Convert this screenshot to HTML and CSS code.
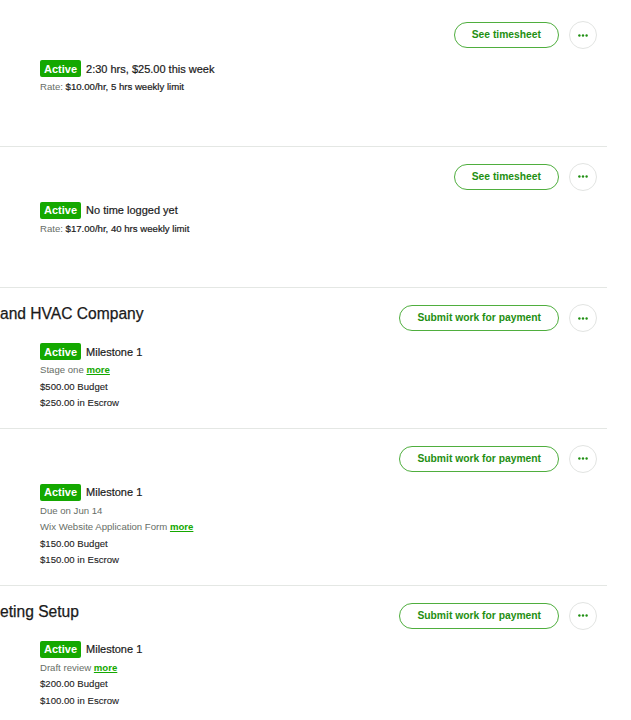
FILE: index.html
```html
<!DOCTYPE html>
<html lang="en">
<head>
<meta charset="utf-8">
<title>Contracts</title>
<link rel="stylesheet" href="styles.css">
</head>
<body>
<div class="contracts">
  <section class="contract contract--hourly">
    <div class="contract-head">
      <h3 class="contract-title"></h3>
      <div class="actions">
        <button class="btn-outline">See timesheet</button>
        <button class="btn-more" aria-label="More"><svg width="10" height="3" viewBox="0 0 10 3"><circle cx="1.4" cy="1.5" r="1.2"/><circle cx="5" cy="1.5" r="1.2"/><circle cx="8.6" cy="1.5" r="1.2"/></svg></button>
      </div>
    </div>
    <div class="details">
      <div class="status-row"><span class="badge">Active</span><span class="status-text">2:30 hrs, $25.00 this week</span></div>
      <div class="line"><span class="muted">Rate:</span> <span class="strong">$10.00/hr, 5 hrs weekly limit</span></div>
    </div>
  </section>

  <section class="contract contract--hourly">
    <div class="contract-head">
      <h3 class="contract-title"></h3>
      <div class="actions">
        <button class="btn-outline">See timesheet</button>
        <button class="btn-more" aria-label="More"><svg width="10" height="3" viewBox="0 0 10 3"><circle cx="1.4" cy="1.5" r="1.2"/><circle cx="5" cy="1.5" r="1.2"/><circle cx="8.6" cy="1.5" r="1.2"/></svg></button>
      </div>
    </div>
    <div class="details">
      <div class="status-row"><span class="badge">Active</span><span class="status-text">No time logged yet</span></div>
      <div class="line"><span class="muted">Rate:</span> <span class="strong">$17.00/hr, 40 hrs weekly limit</span></div>
    </div>
  </section>

  <section class="contract">
    <div class="contract-head">
      <h3 class="contract-title">and HVAC Company</h3>
      <div class="actions">
        <button class="btn-outline">Submit work for payment</button>
        <button class="btn-more" aria-label="More"><svg width="10" height="3" viewBox="0 0 10 3"><circle cx="1.4" cy="1.5" r="1.2"/><circle cx="5" cy="1.5" r="1.2"/><circle cx="8.6" cy="1.5" r="1.2"/></svg></button>
      </div>
    </div>
    <div class="details">
      <div class="status-row"><span class="badge">Active</span><span class="status-text">Milestone 1</span></div>
      <div class="line muted">Stage one <a class="more" href="#">more</a></div>
      <div class="line">$500.00 Budget</div>
      <div class="line">$250.00 in Escrow</div>
    </div>
  </section>

  <section class="contract">
    <div class="contract-head">
      <h3 class="contract-title"></h3>
      <div class="actions">
        <button class="btn-outline">Submit work for payment</button>
        <button class="btn-more" aria-label="More"><svg width="10" height="3" viewBox="0 0 10 3"><circle cx="1.4" cy="1.5" r="1.2"/><circle cx="5" cy="1.5" r="1.2"/><circle cx="8.6" cy="1.5" r="1.2"/></svg></button>
      </div>
    </div>
    <div class="details">
      <div class="status-row"><span class="badge">Active</span><span class="status-text">Milestone 1</span></div>
      <div class="line muted">Due on Jun 14</div>
      <div class="line muted">Wix Website Application Form <a class="more" href="#">more</a></div>
      <div class="line">$150.00 Budget</div>
      <div class="line">$150.00 in Escrow</div>
    </div>
  </section>

  <section class="contract">
    <div class="contract-head">
      <h3 class="contract-title">eting Setup</h3>
      <div class="actions">
        <button class="btn-outline">Submit work for payment</button>
        <button class="btn-more" aria-label="More"><svg width="10" height="3" viewBox="0 0 10 3"><circle cx="1.4" cy="1.5" r="1.2"/><circle cx="5" cy="1.5" r="1.2"/><circle cx="8.6" cy="1.5" r="1.2"/></svg></button>
      </div>
    </div>
    <div class="details">
      <div class="status-row"><span class="badge">Active</span><span class="status-text">Milestone 1</span></div>
      <div class="line muted">Draft review <a class="more" href="#">more</a></div>
      <div class="line">$200.00 Budget</div>
      <div class="line">$100.00 in Escrow</div>
    </div>
  </section>
</div>
</body>
</html>
```

FILE: styles.css
```css
html, body {
  margin: 0;
  padding: 0;
  background: #ffffff;
  overflow: hidden;
}

body {
  font-family: "Liberation Sans", Arial, Helvetica, sans-serif;
  color: #001e00;
}

.contracts {
  margin: 5px 24px 0 0;
}

.contract {
  border-bottom: 1px solid #e4e7e4;
  padding: 16px 0 16px 0;
}

.contract--hourly {
  padding-bottom: 50px;
}

.contract-head {
  display: flex;
  align-items: flex-start;
  justify-content: space-between;
  padding-right: 10px;
  height: 28px;
}

.contract-title {
  margin: 0;
  font-size: 15.6px;
  font-weight: 400;
  line-height: 20px;
  color: #1a1a1a;
  white-space: nowrap;
  -webkit-text-stroke: 0.25px #1a1a1a;
}

.actions {
  display: flex;
  align-items: center;
  gap: 10px;
  height: 28px;
}

.btn-outline {
  height: 26px;
  padding: 0 17px;
  border: 1px solid #4fae3e;
  border-radius: 13px;
  background: #ffffff;
  color: #1f8f12;
  font-family: "Liberation Sans", Arial, sans-serif;
  font-size: 10.3px;
  font-weight: 700;
  line-height: 24px;
  white-space: nowrap;
}

.btn-more {
  width: 28px;
  height: 28px;
  padding: 0;
  border: 1px solid #e2e4e2;
  border-radius: 50%;
  background: #ffffff;
  display: flex;
  align-items: center;
  justify-content: center;
}

.btn-more svg {
  fill: #1f8f12;
  display: block;
}

.details {
  padding-left: 40px;
  margin-top: 11px;
}

.status-row {
  display: flex;
  align-items: center;
  gap: 5px;
  height: 17px;
  margin-bottom: 2px;
}

.badge {
  display: inline-flex;
  align-items: center;
  height: 17px;
  padding: 0 4px;
  border-radius: 2px;
  background: #14a800;
  color: #ffffff;
  font-size: 11px;
  font-weight: 700;
}

.status-text {
  font-size: 11px;
  color: #1a1a1a;
  -webkit-text-stroke: 0.2px #1a1a1a;
}

.line {
  font-size: 9.6px;
  line-height: 16.5px;
  color: #222222;
  white-space: nowrap;
  -webkit-text-stroke: 0.1px #222222;
}

.muted {
  color: #676e67;
  -webkit-text-stroke: 0;
}

.strong {
  color: #1a1a1a;
  -webkit-text-stroke: 0.2px #1a1a1a;
}

.more {
  color: #14a800;
  font-weight: 700;
  text-decoration: underline;
}
```
